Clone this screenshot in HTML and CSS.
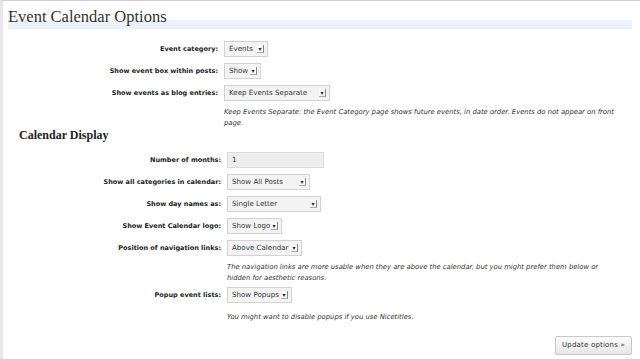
FILE: index.html
```html
<!DOCTYPE html>
<html lang="en">
<head>
  <meta charset="UTF-8" />
  <title>Event Calendar Options</title>
  <link rel="stylesheet" href="styles.css">
</head>
<body>
  <div class="wrap">
    <h2>Event Calendar Options</h2>

    <table class="form-table">
      <tr>
        <th>Event category:</th>
        <td><span class="select sel-category">Events<span class="arrow">&#9662;</span></span></td>
      </tr>
      <tr>
        <th>Show event box within posts:</th>
        <td><span class="select sel-show">Show<span class="arrow">&#9662;</span></span></td>
      </tr>
      <tr>
        <th>Show events as blog entries:</th>
        <td>
          <span class="select sel-blog">Keep Events Separate<span class="arrow">&#9662;</span></span>
          <p class="desc">Keep Events Separate: the Event Category page shows future events, in date order. Events do not appear on front page.</p>
        </td>
      </tr>
    </table>

    <h3>Calendar Display</h3>

    <table class="form-table display-table">
      <tr>
        <th>Number of months:</th>
        <td><span class="input">1</span></td>
      </tr>
      <tr>
        <th>Show all categories in calendar:</th>
        <td><span class="select sel-cats">Show All Posts<span class="arrow">&#9662;</span></span></td>
      </tr>
      <tr>
        <th>Show day names as:</th>
        <td><span class="select sel-days">Single Letter<span class="arrow">&#9662;</span></span></td>
      </tr>
      <tr>
        <th>Show Event Calendar logo:</th>
        <td><span class="select sel-logo">Show Logo<span class="arrow">&#9662;</span></span></td>
      </tr>
      <tr>
        <th>Position of navigation links:</th>
        <td>
          <span class="select sel-nav">Above Calendar<span class="arrow">&#9662;</span></span>
          <p class="desc">The navigation links are more usable when they are above the calendar, but you might prefer them below or hidden for aesthetic reasons.</p>
        </td>
      </tr>
      <tr>
        <th>Popup event lists:</th>
        <td>
          <span class="select sel-popup">Show Popups<span class="arrow">&#9662;</span></span>
          <p class="desc desc-last">You might want to disable popups if you use Nicetitles.</p>
        </td>
      </tr>
    </table>

    <div class="submit">
      <span class="button">Update options &raquo;</span>
    </div>
  </div>
</body>
</html>
```

FILE: styles.css
```css
html {
  background: #fff;
}

body {
  margin: 0;
  min-height: 358px;
  border-top: 1px solid #cfcfcf;
  border-left: 3px solid #e8e8e8;
  font-family: 'DejaVu Sans', Verdana, sans-serif;
  color: #333;
}

.wrap {
  margin: 0 8px 0 5px;
}

h2 {
  margin: 0;
  padding: 6px 0 2px;
  height: 20px;
  font-family: 'Liberation Serif', 'Times New Roman', serif;
  font-size: 16.5px;
  font-weight: normal;
  line-height: 20px;
  color: #333;
  background: linear-gradient(to bottom, #fff 19px, #eaf2fa 19px);
}

h3 {
  margin: 0 0 0 11px;
  font-family: 'Liberation Serif', 'Times New Roman', serif;
  font-size: 12px;
  font-weight: bold;
  line-height: 12px;
  color: #222;
}

.form-table {
  border-collapse: collapse;
  margin-top: 9px;
}

.form-table th {
  width: 210px;
  padding: 3px 6px 3px 0;
  text-align: right;
  vertical-align: top;
  font-size: 6.5px;
  font-weight: bold;
  line-height: 16px;
  color: #222;
  white-space: nowrap;
}

.form-table td {
  padding: 3px 0;
  vertical-align: top;
  width: 392px;
  font-size: 7px;
  line-height: 16px;
}

.display-table {
  margin-top: 8px;
}

.display-table th {
  width: 213px;
  padding-right: 6px;
}

.select,
.input {
  position: relative;
  display: inline-block;
  box-sizing: border-box;
  height: 16px;
  padding: 0 0 0 4px;
  border: 1px solid #d2d2d2;
  background: #f3f3f3;
  font-size: 7.1px;
  line-height: 14px;
  color: #333;
  vertical-align: top;
}

.select .arrow {
  position: absolute;
  top: 3px;
  right: 3px;
  width: 6px;
  height: 7px;
  border-right: 1px solid #888;
  border-bottom: 1px solid #aaa;
  background: #fafafa;
  font-size: 6px;
  line-height: 7px;
  text-align: center;
  color: #222;
}

.sel-category { width: 44px; }
.sel-show { width: 37px; }
.sel-blog { width: 106px; }
.sel-cats { width: 83px; }
.sel-days { width: 94px; }
.sel-logo { width: 55px; }
.sel-nav { width: 75px; }
.sel-popup { width: 65px; }

.input {
  width: 97px;
  background: #eeeeee;
  border-color: #dcdcdc;
}

.desc {
  margin: 6px 0 -3px;
  font-size: 6.8px;
  font-style: italic;
  line-height: 11px;
  color: #333;
}

.desc-last {
  margin-top: 9px;
}

.submit {
  display: flex;
  justify-content: flex-end;
  padding: 13px 0 0;
}

.button {
  display: inline-block;
  box-sizing: border-box;
  height: 19px;
  padding: 0 6px;
  border: 1px solid #c8c8c8;
  border-radius: 2px;
  background: linear-gradient(to bottom, #fdfdfd, #e6e6e6);
  font-size: 7px;
  line-height: 17px;
  color: #333;
  letter-spacing: 0.2px;
}
```
